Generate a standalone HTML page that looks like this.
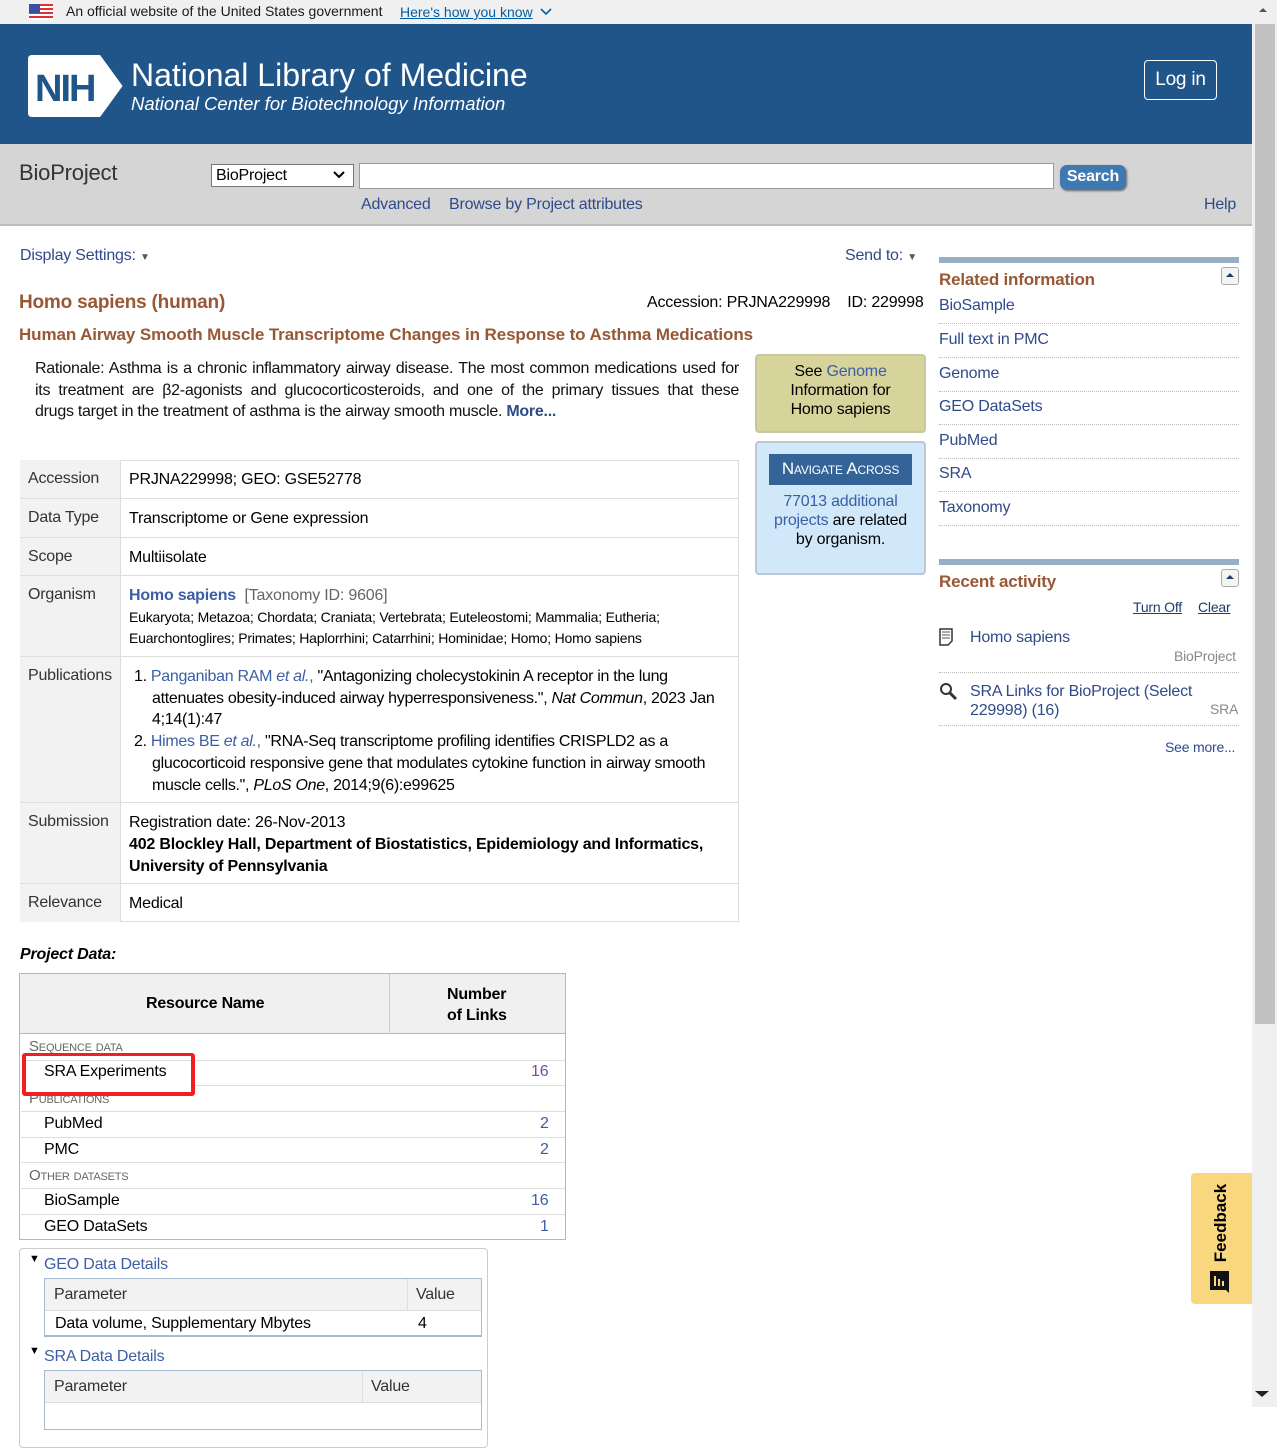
<!DOCTYPE html>
<html><head><meta charset="utf-8">
<style>
*{box-sizing:border-box;margin:0;padding:0}
body{width:1277px;height:1407px;overflow:hidden;position:relative;background:#fff;font-family:"Liberation Sans",Arial,sans-serif;font-size:16px;color:#000;letter-spacing:-0.2px}
.a{position:absolute;white-space:nowrap}
.lnk{color:#2f4a8a}
.blue{color:#3b5ea5}
.brown{color:#985735;font-weight:bold}
.row{position:absolute;left:20px;width:719px;border-top:1px solid #ddd}
.row .l{position:absolute;left:0;top:0;bottom:0;width:101px;background:#f2f2f2;border-right:1px solid #ddd;padding:10px 0 0 8px;color:#333}
.row .v{position:absolute;left:109px;top:9px;right:8px;line-height:22px}
.rl{position:absolute;left:939px;width:300px;border-bottom:1px dotted #bbb;color:#2f4a8a}
.pd{position:absolute;left:21px;width:544px;border-top:1px solid #ddd;height:26px}
.sc{font-variant:small-caps;color:#666;font-size:15px}
.j{text-align:justify;text-align-last:justify;white-space:nowrap}
</style></head><body>
<div class="a" style="left:0;top:0;width:1252px;height:24px;background:#f0f0f0"></div>
<svg class="a" style="left:29px;top:4px" width="24" height="16"><rect width="24" height="16" fill="#fff"/><g fill="#d33"><rect y="0" width="24" height="2"/><rect y="4" width="24" height="2"/><rect y="8" width="24" height="2"/><rect y="12" width="24" height="2"/></g><rect width="11" height="9" fill="#3b4fa0"/></svg>
<div class="a" style="left:66px;top:3px;font-size:14px;color:#1b1b1b;letter-spacing:0">An official website of the United States government</div>
<div class="a" style="left:400px;top:4px;font-size:14px;color:#005ea2;text-decoration:underline;letter-spacing:0">Here's how you know</div>
<svg class="a" style="left:540px;top:8px" width="12" height="8"><path d="M1 1l5 5 5-5" stroke="#005ea2" stroke-width="1.6" fill="none"/></svg>
<div class="a" style="left:0;top:24px;width:1252px;height:120px;background:#20558a"></div>
<svg class="a" style="left:28px;top:55px" width="96" height="62"><path d="M4 0H72L96 31 72 62H4Q0 62 0 58V4Q0 0 4 0Z" fill="#fff"/><path d="M76 2l21 29-21 29" stroke="#20558a" stroke-width="4" fill="none"/><text x="7" y="46" font-family="Liberation Sans" font-size="38" font-weight="bold" fill="#20558a" letter-spacing="-2">NIH</text></svg>
<div class="a" style="left:131px;top:57px;font-size:32px;color:#fff;letter-spacing:0">National Library of Medicine</div>
<div class="a" style="left:131px;top:93px;font-size:18.5px;color:#fff;font-style:italic;letter-spacing:0">National Center for Biotechnology Information</div>
<div class="a" style="left:1144px;top:60px;width:73px;height:40px;border:1px solid #fff;border-radius:4px;color:#fff;font-size:19px;text-align:center;line-height:38px">Log in</div>
<div class="a" style="left:0;top:144px;width:1252px;height:82px;background:#d5d5d5;border-bottom:2px solid #bbb"></div>
<div class="a" style="left:19px;top:160px;font-size:22px;color:#333">BioProject</div>
<div class="a" style="left:211px;top:164px;width:143px;height:23px;background:#fff;border:1px solid #777;padding-left:4px;line-height:21px;font-size:16px">BioProject</div>
<svg class="a" style="left:333px;top:171px" width="12" height="8"><path d="M1 1l5 5 5-5" stroke="#000" stroke-width="2" fill="none"/></svg>
<div class="a" style="left:359px;top:163px;width:695px;height:26px;background:#fff;border:1px solid #999"></div>
<div class="a" style="left:1060px;top:165px;width:66px;height:25px;background:#3f79b1;border-radius:7px;box-shadow:1px 1px 2px #666;color:#fff;font-weight:bold;font-size:16px;text-align:center;line-height:24px">Search</div>
<div class="a lnk" style="left:361px;top:196px">Advanced</div>
<div class="a lnk" style="left:449px;top:196px">Browse by Project attributes</div>
<div class="a lnk" style="left:1204px;top:196px">Help</div>
<div class="a" style="left:1252px;top:0;width:25px;height:1407px;background:#f0f0f0"></div>
<div class="a" style="left:1255px;top:24px;width:20px;height:1000px;background:#c1c1c1"></div>
<svg class="a" style="left:1256px;top:5px" width="14" height="10"><path d="M3 7l4-4 4 4z" fill="#555"/></svg>
<svg class="a" style="left:1252px;top:1388px" width="20" height="12"><path d="M3 3h14l-7 6z" fill="#222"/></svg>
<div class="a lnk" style="left:20px;top:247px">Display Settings: <span style="font-size:10px;color:#555">▼</span></div>
<div class="a lnk" style="left:845px;top:247px">Send to: <span style="font-size:10px;color:#555">▼</span></div>
<div class="a brown" style="left:19px;top:292px;font-size:19px">Homo sapiens (human)</div>
<div class="a" style="left:647px;top:294px">Accession: PRJNA229998&nbsp;&nbsp;&nbsp; ID: 229998</div>
<div class="a brown" style="left:19px;top:325px;font-size:17px;letter-spacing:-0.1px">Human Airway Smooth Muscle Transcriptome Changes in Response to Asthma Medications</div>
<div class="a" style="left:35px;top:358px;width:704px;white-space:normal;line-height:21.5px;color:#111;letter-spacing:-0.27px">
<div class="j">Rationale: Asthma is a chronic inflammatory airway disease. The most common medications used for</div>
<div class="j">its treatment are β2-agonists and glucocorticosteroids, and one of the primary tissues that these</div>
<div style="white-space:nowrap">drugs target in the treatment of asthma is the airway smooth muscle. <b class="lnk">More...</b></div></div>
<div class="a" style="left:755px;top:354px;width:171px;height:79px;background:#d6d39b;border:2px solid #c9c7a2;border-radius:4px;text-align:center;line-height:19px;padding-top:6px;white-space:normal">See <span class="blue">Genome</span><br>Information for<br>Homo sapiens</div>
<div class="a" style="left:755px;top:441px;width:171px;height:134px;background:#d0e8fa;border:2px solid #bcc8d4;border-radius:4px;text-align:center;line-height:19px;white-space:normal">
<div style="margin:11px 12px 0;height:31px;background:#336397;color:#fff;font-variant:small-caps;font-size:17px;line-height:30px">Navigate Across</div>
<div style="margin-top:7px"><span class="blue">77013 additional<br>projects</span> are related<br>by organism.</div></div>
<div class="a" style="left:20px;top:460px;width:719px;height:462px;border:1px solid #ddd"></div>
<div class="row" style="top:460px;height:38px;border-top:none"><div class="l">Accession</div><div class="v">PRJNA229998; GEO: GSE52778</div></div>
<div class="row" style="top:498px;height:39px"><div class="l">Data Type</div><div class="v">Transcriptome or Gene expression</div></div>
<div class="row" style="top:537px;height:38px"><div class="l">Scope</div><div class="v">Multiisolate</div></div>
<div class="row" style="top:575px;height:81px"><div class="l">Organism</div><div class="v"><b class="blue">Homo sapiens</b> &nbsp;<span style="color:#666">[Taxonomy ID: 9606]</span><div style="font-size:14px;line-height:21px;margin-top:0">Eukaryota; Metazoa; Chordata; Craniata; Vertebrata; Euteleostomi; Mammalia; Eutheria;<br>Euarchontoglires; Primates; Haplorrhini; Catarrhini; Hominidae; Homo; Homo sapiens</div></div></div>
<div class="row" style="top:656px;height:146px"><div class="l">Publications</div><div class="v" style="white-space:normal;left:114px;right:4px;line-height:21.7px;letter-spacing:-0.3px">
<div style="padding-left:18px;text-indent:-18px">1. <span class="blue">Panganiban RAM <i>et al.</i>,</span> "Antagonizing cholecystokinin A receptor in the lung attenuates obesity-induced airway hyperresponsiveness.", <i>Nat Commun</i>, 2023 Jan 4;14(1):47</div>
<div style="padding-left:18px;text-indent:-18px">2. <span class="blue">Himes BE <i>et al.</i>,</span> "RNA-Seq transcriptome profiling identifies CRISPLD2 as a glucocorticoid responsive gene that modulates cytokine function in airway smooth muscle cells.", <i>PLoS One</i>, 2014;9(6):e99625</div></div></div>
<div class="row" style="top:802px;height:81px"><div class="l">Submission</div><div class="v" style="letter-spacing:-0.2px">Registration date: 26-Nov-2013<br><b>402 Blockley Hall, Department of Biostatistics, Epidemiology and Informatics,<br>University of Pennsylvania</b></div></div>
<div class="row" style="top:883px;height:39px"><div class="l">Relevance</div><div class="v">Medical</div></div>
<div class="a" style="left:939px;top:257px;width:300px;height:6px;background:#97afc6"></div>
<div class="a brown" style="left:939px;top:270px;font-size:17px">Related information</div>
<div class="a" style="left:1221px;top:267px;width:18px;height:18px;border:1px solid #aaa;border-radius:3px;background:#f4f4f4"></div>
<svg class="a" style="left:1224px;top:271px" width="12" height="8"><path d="M2 6l4-4 4 4z" fill="#1c3d6e"/></svg>
<div class="rl" style="top:297px;height:27px">BioSample</div>
<div class="rl" style="top:331px;height:27px">Full text in PMC</div>
<div class="rl" style="top:365px;height:27px">Genome</div>
<div class="rl" style="top:398px;height:27px">GEO DataSets</div>
<div class="rl" style="top:432px;height:27px">PubMed</div>
<div class="rl" style="top:465px;height:27px">SRA</div>
<div class="rl" style="top:499px;height:27px">Taxonomy</div>
<div class="a" style="left:939px;top:559px;width:300px;height:6px;background:#97afc6"></div>
<div class="a brown" style="left:939px;top:572px;font-size:17px">Recent activity</div>
<div class="a" style="left:1221px;top:569px;width:18px;height:18px;border:1px solid #aaa;border-radius:3px;background:#f4f4f4"></div>
<svg class="a" style="left:1224px;top:573px" width="12" height="8"><path d="M2 6l4-4 4 4z" fill="#1c3d6e"/></svg>
<div class="a" style="left:1133px;top:599px;font-size:14px;color:#1c3d6e;text-decoration:underline">Turn Off</div>
<div class="a" style="left:1198px;top:599px;font-size:14px;color:#1c3d6e;text-decoration:underline">Clear</div>
<svg class="a" style="left:939px;top:628px" width="14" height="18"><path d="M1 1h12v12l-4 4H1z" fill="#fff" stroke="#333" stroke-width="1.5"/><path d="M3 4h8M3 7h8M3 10h8" stroke="#555"/></svg>
<div class="a lnk" style="left:970px;top:629px">Homo sapiens</div>
<div class="a" style="left:1174px;top:648px;font-size:14px;color:#888">BioProject</div>
<div class="a" style="left:939px;top:672px;width:300px;border-top:1px dotted #bbb"></div>
<svg class="a" style="left:939px;top:682px" width="20" height="20"><circle cx="7" cy="7" r="5" fill="#fff" stroke="#333" stroke-width="2"/><path d="M11 11l6 6" stroke="#333" stroke-width="3"/></svg>
<div class="a lnk" style="left:970px;top:682px;line-height:19px">SRA Links for BioProject (Select<br>229998) (16)</div>
<div class="a" style="left:1210px;top:701px;font-size:14px;color:#888">SRA</div>
<div class="a" style="left:939px;top:725px;width:300px;border-top:1px dotted #bbb"></div>
<div class="a lnk" style="left:1165px;top:739px;font-size:14px">See more...</div>
<div class="a" style="left:20px;top:946px;font-weight:bold;font-style:italic">Project Data:</div>
<div class="a" style="left:19px;top:973px;width:547px;height:267px;border:1px solid #a8bad0"></div>
<div class="a" style="left:20px;top:974px;width:545px;height:60px;background:#f0f0f0;border-bottom:1px solid #a8bad0"></div>
<div class="a" style="left:389px;top:974px;width:1px;height:60px;background:#ccc"></div>
<div class="a" style="left:146px;top:995px;font-weight:bold">Resource Name</div>
<div class="a" style="left:447px;top:984px;font-weight:bold;line-height:21px;white-space:normal;width:80px">Number<br>of Links</div>
<div class="a sc" style="left:29px;top:1038px">Sequence data</div>
<div class="pd" style="top:1060px"></div>
<div class="pd" style="top:1085px"></div>
<div class="a sc" style="left:29px;top:1090px">Publications</div>
<div class="a" style="left:22px;top:1053px;width:173px;height:43px;border:4px solid #f02020;border-radius:3px;background:#fff;border-top-width:3px"></div>
<div class="a" style="left:26px;top:1060px;width:165px;border-top:1px solid #ddd"></div>
<div class="a" style="left:44px;top:1063px">SRA Experiments</div><div class="a" style="left:531px;top:1063px;color:#7a4a9a">16</div>
<div class="pd" style="top:1111px"></div>
<div class="a" style="left:44px;top:1115px">PubMed</div><div class="a blue" style="left:540px;top:1115px">2</div>
<div class="pd" style="top:1137px"></div>
<div class="a" style="left:44px;top:1141px">PMC</div><div class="a blue" style="left:540px;top:1141px">2</div>
<div class="pd" style="top:1162px"></div>
<div class="a sc" style="left:29px;top:1167px">Other datasets</div>
<div class="pd" style="top:1188px"></div>
<div class="a" style="left:44px;top:1192px">BioSample</div><div class="a blue" style="left:531px;top:1192px">16</div>
<div class="pd" style="top:1214px"></div>
<div class="a" style="left:44px;top:1218px">GEO DataSets</div><div class="a blue" style="left:540px;top:1218px">1</div>
<div class="a" style="left:19px;top:1248px;width:469px;height:200px;border:1px solid #ccc;border-radius:4px"></div>
<div class="a" style="left:29px;top:1253px;font-size:11px">▼</div>
<div class="a blue" style="left:44px;top:1256px">GEO Data Details</div>
<div class="a" style="left:44px;top:1278px;width:438px;height:59px;border:1px solid #a8bad0;border-bottom:2px solid #a8bad0"></div>
<div class="a" style="left:45px;top:1279px;width:436px;height:32px;background:#f2f2f2;border-bottom:1px solid #ddd"></div>
<div class="a" style="left:407px;top:1279px;width:1px;height:32px;background:#ddd"></div>
<div class="a" style="left:54px;top:1286px;color:#333">Parameter</div><div class="a" style="left:416px;top:1286px;color:#333">Value</div>
<div class="a" style="left:55px;top:1315px">Data volume, Supplementary Mbytes</div><div class="a" style="left:418px;top:1315px">4</div>
<div class="a" style="left:29px;top:1345px;font-size:11px">▼</div>
<div class="a blue" style="left:44px;top:1348px">SRA Data Details</div>
<div class="a" style="left:44px;top:1370px;width:438px;height:60px;border:1px solid #a8bad0"></div>
<div class="a" style="left:45px;top:1371px;width:436px;height:32px;background:#f2f2f2;border-bottom:1px solid #ddd"></div>
<div class="a" style="left:362px;top:1371px;width:1px;height:32px;background:#ddd"></div>
<div class="a" style="left:54px;top:1378px;color:#333">Parameter</div><div class="a" style="left:371px;top:1378px;color:#333">Value</div>
<div class="a" style="left:1191px;top:1173px;width:61px;height:131px;background:#f9d77e;border-radius:4px 0 0 4px"></div>
<div class="a" style="left:1181px;top:1213px;width:80px;height:20px;line-height:20px;transform:rotate(-90deg);transform-origin:40px 10px;font-weight:bold;font-size:17px;text-align:center;letter-spacing:0">Feedback</div>
<svg class="a" style="left:1209px;top:1270px" width="22" height="24"><path d="M1 1h19v22l-3-3H1z" fill="#111"/><path d="M6 6v10M10 9v7M14 11v5" stroke="#f9d77e" stroke-width="2"/></svg>
</body></html>
